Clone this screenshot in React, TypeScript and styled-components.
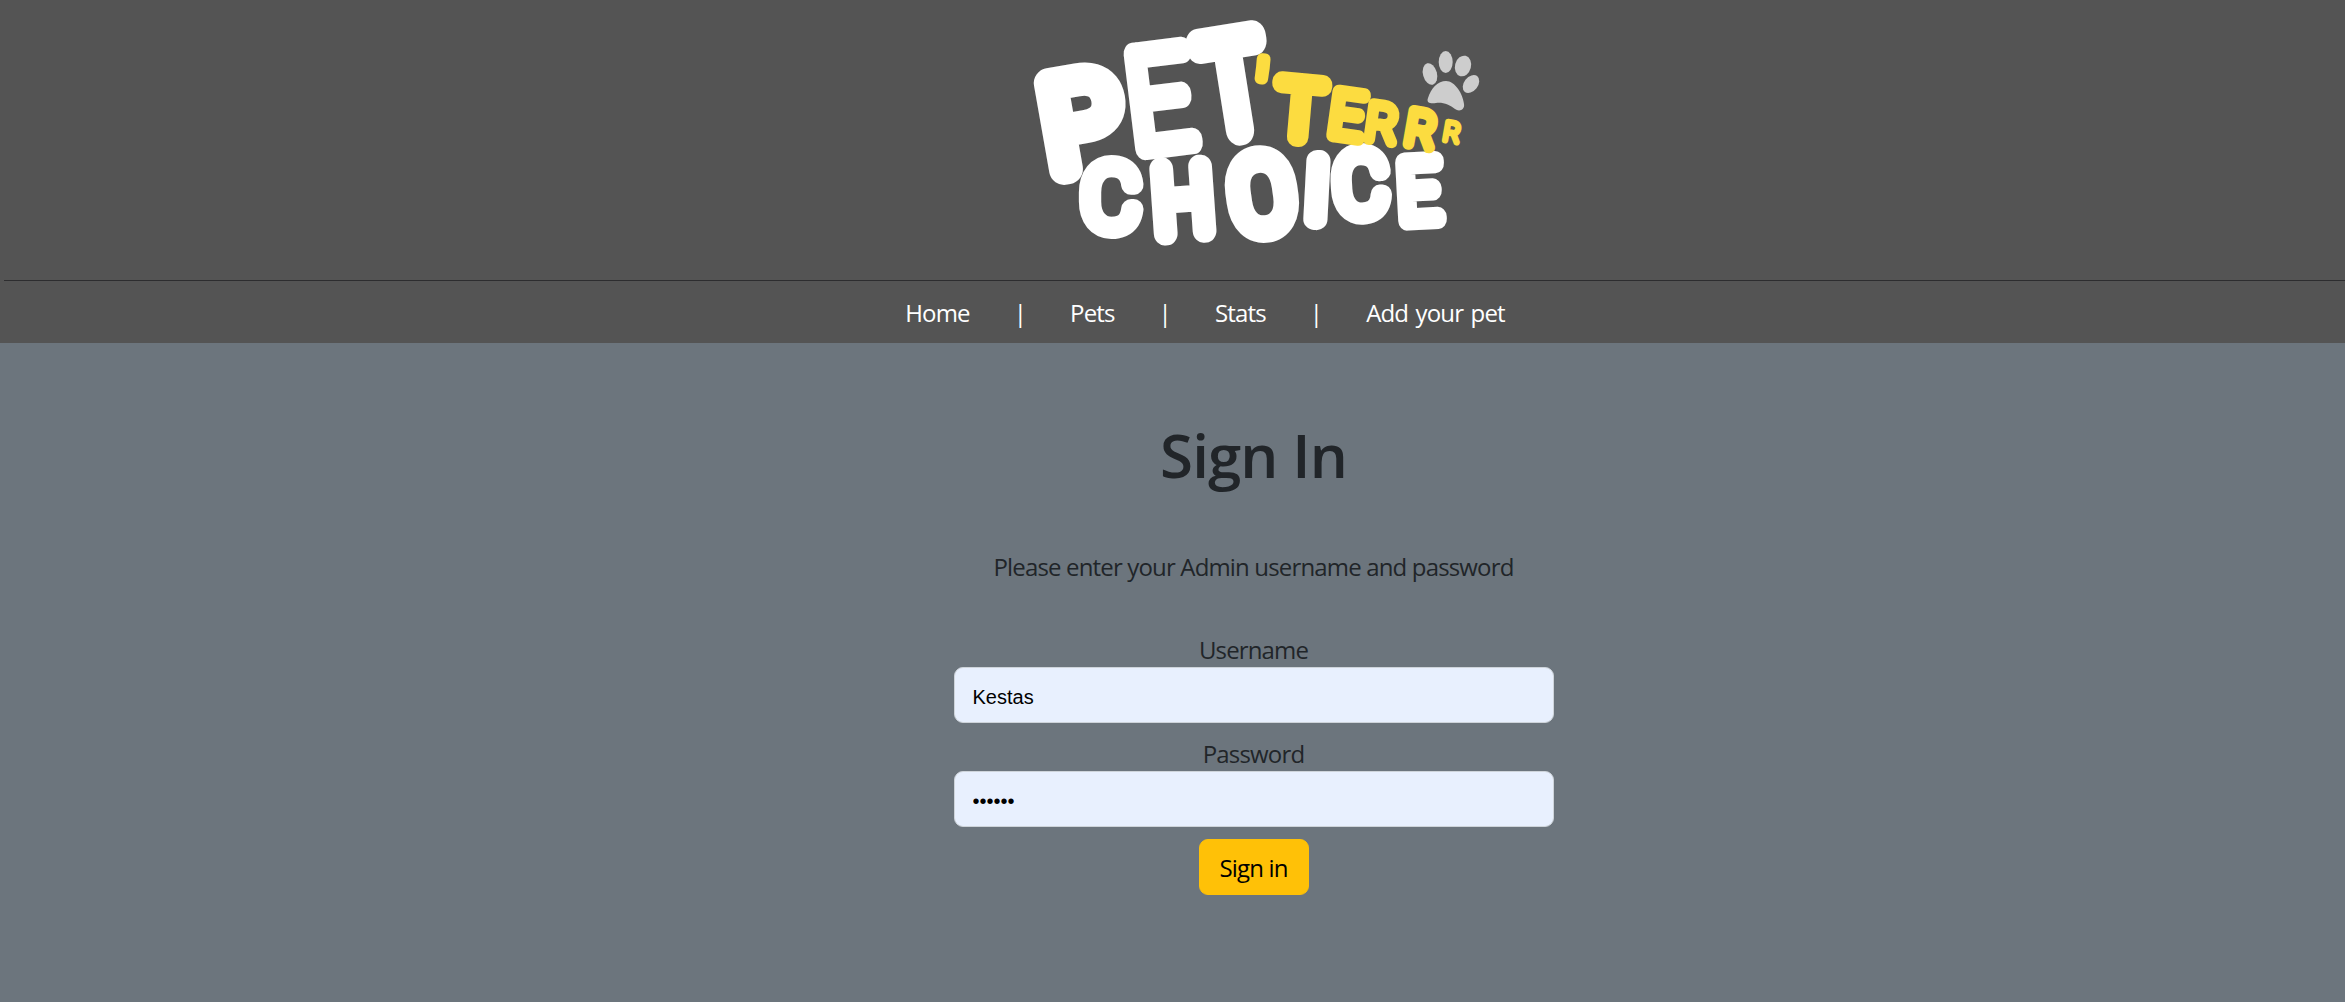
import React from "react";
import styled, { createGlobalStyle } from "styled-components";

const Global = createGlobalStyle`
  html, body { margin: 0; padding: 0; }
  body {
    background: #6c757d;
    color: #212529;
    font-family: "Open Sans", "Noto Sans", sans-serif;
    font-size: 24px;
    line-height: 36px;
    letter-spacing: -0.035em;
  }
`;

const Page = styled.div`
  display: flex;
  flex-direction: column;
  min-height: 1002px;
  background: #6c757d;
`;

const Header = styled.header`
  display: flex;
  flex-direction: column;
  background: #545454;
`;

const LogoRow = styled.div`
  display: flex;
  justify-content: center;
  height: 280px;
  padding-left: 175px;
`;

const Rule = styled.hr`
  height: 1px;
  margin: 0 0 0 4px;
  border: 0;
  background: #2d2d2f;
`;

const Nav = styled.nav`
  display: flex;
  align-items: center;
  justify-content: center;
  gap: 44px;
  height: 60px;
  padding: 2px 0 0 65px;
`;

const NavLink = styled.a`
  color: #fff;
  text-decoration: none;
  white-space: nowrap;
  word-spacing: 2px;
`;

const NavSep = styled.span`
  color: #fff;
`;

const Main = styled.main`
  display: flex;
  flex-direction: column;
  align-items: center;
  padding: 76px 0 0 162px;
`;

const Title = styled.h1`
  margin: 0;
  font-size: 60px;
  line-height: 72px;
  font-weight: 600;
  letter-spacing: -0.015em;
`;

const Intro = styled.p`
  margin: 58px 0 0;
`;

const Form = styled.form`
  display: flex;
  flex-direction: column;
  align-items: center;
  width: 600px;
  margin-top: 48px;
`;

const Field = styled.div`
  display: flex;
  flex-direction: column;
  align-items: center;
  width: 100%;
  margin-bottom: 14px;
`;

const Label = styled.label`
  line-height: 34px;
`;

const Input = styled.input`
  box-sizing: border-box;
  width: 100%;
  height: 56px;
  padding: 5px 18px 0;
  border: 1px solid #ced4da;
  border-radius: 9px;
  outline: none;
  background: #e8f0fe;
  color: #000;
  font-family: "Liberation Sans", Arial, sans-serif;
  font-size: 20px;
  letter-spacing: 0;
`;

const Submit = styled.button`
  box-sizing: border-box;
  width: 110px;
  height: 56px;
  margin-top: -2px;
  padding: 2px 0 0;
  border: 1px solid #ffc107;
  border-radius: 9px;
  background: #ffc107;
  color: #000;
  font: inherit;
  letter-spacing: inherit;
`;

const LogoSvg = styled.svg`
  display: block;
  flex: none;
`;

const LogoLetter = styled.text<{ $tone: string; $sw: number }>`
  font-family: Roboto, "Liberation Sans", sans-serif;
  font-weight: 100;
  letter-spacing: 0;
  text-anchor: middle;
  fill: ${(p) => p.$tone};
  stroke: ${(p) => p.$tone};
  stroke-width: ${(p) => p.$sw}px;
  stroke-linejoin: round;
  stroke-linecap: round;
`;

const Toe = styled.ellipse`
  fill: #cdcdcd;
`;

const Pad = styled.path`
  fill: #cdcdcd;
`;

type L = { ch: string; x: number; y: number; h: number; r: number; sx: number; sw: number; tone: string };
const W = "#ffffff";
const Y = "#fcdc40";
const letters: L[] = [
  { ch: "P", x: 1082, y: 122, h: 118, r: -10, sx: 1.02, sw: 30, tone: W },
  { ch: "E", x: 1160, y: 99, h: 118, r: -7, sx: 0.84, sw: 23, tone: W },
  { ch: "T", x: 1233, y: 85, h: 122, r: -9, sx: 0.8, sw: 32, tone: W },
  { ch: "C", x: 1111, y: 197, h: 82, r: 0, sx: 1.0, sw: 20, tone: W },
  { ch: "H", x: 1183, y: 200, h: 88, r: -4, sx: 0.9, sw: 24, tone: W },
  { ch: "O", x: 1262, y: 194, h: 96, r: -8, sx: 0.92, sw: 25, tone: W },
  { ch: "I", x: 1317, y: 190, h: 80, r: 3, sx: 1, sw: 22, tone: W },
  { ch: "C", x: 1361, y: 184, h: 80, r: -3, sx: 0.96, sw: 20, tone: W },
  { ch: "E", x: 1419, y: 191, h: 78, r: -3, sx: 0.88, sw: 20, tone: W },
  { ch: "'", x: 1260, y: 98, h: 82, r: 5, sx: 1, sw: 11, tone: Y },
  { ch: "T", x: 1300, y: 110, h: 74, r: 5, sx: 0.98, sw: 20, tone: Y },
  { ch: "E", x: 1347, y: 115, h: 58, r: 8, sx: 0.95, sw: 14, tone: Y },
  { ch: "R", x: 1382, y: 123, h: 47, r: 8, sx: 0.95, sw: 11, tone: Y },
  { ch: "R", x: 1421, y: 129, h: 45, r: 10, sx: 0.95, sw: 11, tone: Y },
  { ch: "R", x: 1452, y: 132, h: 25, r: 10, sx: 0.95, sw: 6, tone: Y },
];

function Logo() {
  return (
    <LogoSvg viewBox="1000 0 520 270" width={520} height={270} aria-label="Pet'Terrr Choice">
      {letters.map((l, i) => {
        const fs = (l.h - l.sw) / 0.71;
        return (
          <LogoLetter
            key={i}
            $tone={l.tone}
            $sw={l.sw}
            fontSize={fs}
            transform={`translate(${l.x} ${l.y}) rotate(${l.r}) scale(${l.sx} 1) translate(0 ${fs * 0.355})`}
          >
            {l.ch}
          </LogoLetter>
        );
      })}
      <Toe cx={1430} cy={74} rx={7} ry={11} transform="rotate(-15 1430 74)" />
      <Toe cx={1445.7} cy={62} rx={7} ry={11} />
      <Toe cx={1463} cy={66} rx={8} ry={10.5} transform="rotate(15 1463 66)" />
      <Toe cx={1471} cy={84} rx={7} ry={10} transform="rotate(38 1471 84)" />
      <Pad d="M1428 98C1431 88 1438 81 1446 81C1455 81 1463 94 1464 104C1465 110 1459 112 1455 109C1450 105 1443 102 1436 103C1431 104 1426 103 1428 98Z" />
    </LogoSvg>
  );
}

export default function App() {
  return (
    <Page>
      <Global />
      <Header>
        <LogoRow>
          <Logo />
        </LogoRow>
        <Rule />
        <Nav>
          <NavLink href="#">Home</NavLink>
          <NavSep>|</NavSep>
          <NavLink href="#">Pets</NavLink>
          <NavSep>|</NavSep>
          <NavLink href="#">Stats</NavLink>
          <NavSep>|</NavSep>
          <NavLink href="#">Add your pet</NavLink>
        </Nav>
      </Header>
      <Main>
        <Title>Sign In</Title>
        <Intro>Please enter your Admin username and password</Intro>
        <Form onSubmit={(e) => e.preventDefault()}>
          <Field>
            <Label htmlFor="username">Username</Label>
            <Input id="username" type="text" defaultValue="Kestas" />
          </Field>
          <Field>
            <Label htmlFor="password">Password</Label>
            <Input id="password" type="password" defaultValue="kestas" />
          </Field>
          <Submit type="submit">Sign in</Submit>
        </Form>
      </Main>
    </Page>
  );
}
